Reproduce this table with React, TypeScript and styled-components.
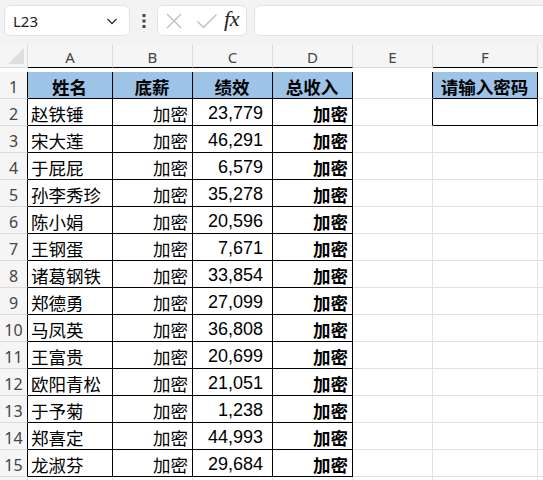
import React from "react";
import styled, { createGlobalStyle } from "styled-components";

const Global = createGlobalStyle`
  html, body { margin: 0; padding: 0; background: #ffffff; overflow: hidden; }
  body { font-family: "Noto Sans CJK SC", "Noto Sans", sans-serif; }
  * { box-sizing: border-box; }
`;

const Page = styled.div`
  width: 543px;
  height: 480px;
  overflow: hidden;
  background: #ffffff;
`;

const Toolbar = styled.div`
  display: flex;
  align-items: flex-start;
  height: 45px;
  padding: 5px 0 0 4px;
  background: #f3f3f3;
`;

const Box = styled.div<{ $w?: number }>`
  height: 31px;
  background: #ffffff;
  border: 1px solid #e3e3e3;
  border-radius: 6px;
  display: flex;
  align-items: center;
  ${(p) => (p.$w ? `width: ${p.$w}px; flex: none;` : `flex: 1; margin-right: -12px;`)}
`;

const NameText = styled.span`
  flex: 1;
  padding-left: 8px;
  font-family: "Noto Sans", "Open Sans", sans-serif;
  font-size: 15px;
  color: #222;
`;

const Dots = styled.div`
  width: 27px;
  height: 31px;
  display: flex;
  align-items: center;
  justify-content: center;
`;

const FxGlyph = styled.span`
  font-family: "Liberation Serif", "DejaVu Serif", serif;
  font-style: italic;
  font-size: 22px;
  color: #222;
  margin-left: auto;
  margin-right: 7px;
  margin-top: -3px;
  letter-spacing: -0.5px;
`;

const Grid = styled.div`
  display: grid;
  grid-template-columns: 28px 85px 80px 80px 80px 80px 105px 1fr;
  grid-auto-rows: 27px;
`;

const ColHead = styled.div<{ $bb?: boolean }>`
  height: 23px;
  background: #f5f5f5;
  border-right: 1px solid #dadada;
  border-bottom: 1px solid ${(p) => (p.$bb ? "#000" : "#dadada")};
  display: flex;
  align-items: center;
  justify-content: center;
  font-family: "Noto Sans", "Open Sans", sans-serif;
  font-size: 15px;
  color: #444;
  padding-top: 1px;
`;

const Corner = styled(ColHead)`
  position: relative;
  &::after {
    content: "";
    position: absolute;
    right: 3px;
    bottom: 3px;
    width: 0;
    height: 0;
    border-left: 16px solid transparent;
    border-bottom: 16px solid #dedede;
  }
`;

const RowHead = styled.div<{ $rb?: boolean }>`
  background: #f5f5f5;
  border-right: 1px solid ${(p) => (p.$rb ? "#000" : "#dadada")};
  border-bottom: 1px solid #dadada;
  display: flex;
  align-items: center;
  justify-content: center;
  font-family: "Noto Sans", "Open Sans", sans-serif;
  font-size: 16px;
  color: #444;
  padding-top: 3px;
`;

type Align = "left" | "right" | "center";

const Cell = styled.div<{
  $rb?: boolean;
  $bb?: boolean;
  $align?: Align;
  $bold?: boolean;
  $fill?: boolean;
  $num?: boolean;
  $pr?: number;
}>`
  background: ${(p) => (p.$fill ? "#9dc3e6" : "#ffffff")};
  border-right: 1px solid ${(p) => (p.$rb ? "#000" : "#e1e1e1")};
  border-bottom: 1px solid ${(p) => (p.$bb ? "#000" : "#e1e1e1")};
  display: flex;
  align-items: center;
  justify-content: ${(p) =>
    p.$align === "right" ? "flex-end" : p.$align === "center" ? "center" : "flex-start"};
  padding: 2px ${(p) => p.$pr ?? 4}px 0 3px;
  font-family: ${(p) =>
    p.$num
      ? `"Liberation Sans", "Noto Sans", sans-serif`
      : `"Noto Sans CJK SC", "Noto Sans", sans-serif`};
  font-size: ${(p) => (p.$num ? 18 : 17.5)}px;
  font-weight: ${(p) => (p.$bold ? 700 : 400)};
  color: #000;
  white-space: nowrap;
  overflow: hidden;
`;

const data: [string, string][] = [
  ["赵铁锤", "23,779"],
  ["宋大莲", "46,291"],
  ["于屁屁", "6,579"],
  ["孙李秀珍", "35,278"],
  ["陈小娟", "20,596"],
  ["王钢蛋", "7,671"],
  ["诸葛钢铁", "33,854"],
  ["郑德勇", "27,099"],
  ["马凤英", "36,808"],
  ["王富贵", "20,699"],
  ["欧阳青松", "21,051"],
  ["于予菊", "1,238"],
  ["郑喜定", "44,993"],
  ["龙淑芬", "29,684"],
];

const Chevron = () => (
  <svg width="14" height="14" viewBox="0 0 14 14" style={{ marginRight: 10 }}>
    <path d="M2.5 5 L7 9.5 L11.5 5" fill="none" stroke="#333" strokeWidth="1.3" />
  </svg>
);

const XIcon = () => (
  <svg width="18" height="18" viewBox="0 0 18 18" style={{ marginLeft: 7 }}>
    <path d="M2 2 L16 16 M16 2 L2 16" stroke="#bdbdbd" strokeWidth="1.3" fill="none" />
  </svg>
);

const CheckIcon = () => (
  <svg width="22" height="18" viewBox="0 0 22 18" style={{ marginLeft: 13 }}>
    <path d="M1.5 9.5 L7.5 15.5 L20.5 2.5" stroke="#bdbdbd" strokeWidth="1.3" fill="none" />
  </svg>
);

const VDots = () => (
  <svg width="4" height="16" viewBox="0 0 4 16">
    <rect x="0.5" y="1" width="3" height="3" fill="#444" />
    <rect x="0.5" y="6.5" width="3" height="3" fill="#444" />
    <rect x="0.5" y="12" width="3" height="3" fill="#444" />
  </svg>
);

export default function App() {
  const rows = [];
  rows.push(
    <React.Fragment key="r1">
      <RowHead $rb>1</RowHead>
      <Cell $fill $bold $align="center" $rb $bb>姓名</Cell>
      <Cell $fill $bold $align="center" $rb $bb>底薪</Cell>
      <Cell $fill $bold $align="center" $rb $bb>绩效</Cell>
      <Cell $fill $bold $align="center" $rb $bb>总收入</Cell>
      <Cell $rb />
      <Cell $fill $bold $align="center" $rb $bb>请输入密码</Cell>
      <Cell />
    </React.Fragment>
  );
  data.forEach(([name, num], i) => {
    const r = i + 2;
    rows.push(
      <React.Fragment key={r}>
        <RowHead $rb>{r}</RowHead>
        <Cell $rb $bb>{name}</Cell>
        <Cell $rb $bb $align="right" $pr={4}>加密</Cell>
        <Cell $rb $bb $align="right" $num $pr={9}>{num}</Cell>
        <Cell $rb $bb $align="right" $bold $pr={4}>加密</Cell>
        <Cell $rb={r === 2} />
        <Cell $rb={r === 2} $bb={r === 2} />
        <Cell />
      </React.Fragment>
    );
  });
  rows.push(
    <React.Fragment key="r16">
      <RowHead />
      <Cell />
      <Cell />
      <Cell />
      <Cell />
      <Cell />
      <Cell />
      <Cell />
    </React.Fragment>
  );

  return (
    <Page>
      <Global />
      <Toolbar>
        <Box $w={126}>
          <NameText>L23</NameText>
          <Chevron />
        </Box>
        <Dots>
          <VDots />
        </Dots>
        <Box $w={90}>
          <XIcon />
          <CheckIcon />
          <FxGlyph>fx</FxGlyph>
        </Box>
        <div style={{ width: 7 }} />
        <Box />
      </Toolbar>
      <Grid>
        <Corner />
        <ColHead $bb>A</ColHead>
        <ColHead $bb>B</ColHead>
        <ColHead $bb>C</ColHead>
        <ColHead $bb>D</ColHead>
        <ColHead>E</ColHead>
        <ColHead $bb>F</ColHead>
        <ColHead />
        {rows}
      </Grid>
    </Page>
  );
}
